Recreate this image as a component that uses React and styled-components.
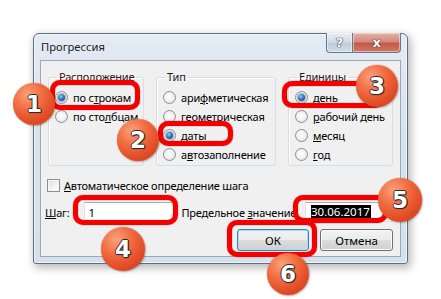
import styled, { createGlobalStyle } from 'styled-components';

const GlobalStyle = createGlobalStyle`
  html, body {
    margin: 0;
    padding: 0;
    background: #ffffff;
  }
  * {
    box-sizing: border-box;
  }
`;

const Page = styled.div`
  position: relative;
  width: 441px;
  height: 299px;
  overflow: hidden;
  padding: 33px 0 0 33px;
  background: #ffffff;
  font-family: 'Noto Sans', 'Open Sans', sans-serif;
  font-size: 11px;
  letter-spacing: -0.2px;
  color: #000;
`;

const Window = styled.div`
  width: 375px;
  height: 231px;
  display: flex;
  flex-direction: column;
  padding: 0 6px 6px;
  border: 1px solid #5f6d7d;
  border-radius: 6px 6px 3px 3px;
  background: linear-gradient(180deg, #e3ebf4 0%, #d9e3ee 40%, #d6e0eb 100%);
  box-shadow: inset 0 0 0 1px rgba(255, 255, 255, 0.6), 2px 3px 9px 1px rgba(0, 0, 0, 0.28);
`;

const TitleBar = styled.div`
  height: 26px;
  display: flex;
  justify-content: space-between;
  align-items: flex-start;
  flex-shrink: 0;
`;

const Title = styled.div`
  line-height: 26px;
  padding-left: 1px;
  font-size: 11.2px;
  letter-spacing: 0;
  color: #1b1b1b;
`;

const CaptionButtons = styled.div`
  display: flex;
  margin-top: -1px;
  height: 20px;
`;

const CaptionButton = styled.div`
  width: ${(p) => p.$w}px;
  height: 20px;
  display: flex;
  align-items: center;
  justify-content: center;
  border: 1px solid #6a7785;
  border-top: none;
  border-left: ${(p) => (p.$close ? 'none' : '1px solid #6a7785')};
  border-radius: ${(p) => (p.$close ? '0 0 4px 0' : '0 0 0 4px')};
  background: ${(p) =>
    p.$close
      ? 'linear-gradient(180deg, #e3b1a8 0%, #d48a7e 45%, #c25a49 55%, #cf7a6a 100%)'
      : 'linear-gradient(180deg, #e6edf4 0%, #d3dde8 45%, #bfcddb 55%, #cfdbe7 100%)'};
  box-shadow: inset 0 0 0 1px rgba(255, 255, 255, 0.45);
  font-family: 'DejaVu Sans', sans-serif;
  font-weight: bold;
  font-size: 13px;
  color: #ffffff;
  text-shadow: 0 0 1px #3a3a3a, 0 0 1px #3a3a3a, 0 0 1px #3a3a3a;
`;

const Client = styled.div`
  flex: 1;
  display: flex;
  flex-direction: column;
  padding: 9px 7px 0;
  border: 1px solid #9aa8b7;
  background: #f0f0f0;
`;

const GroupsRow = styled.div`
  display: flex;
  gap: 12px;
`;

const Group = styled.fieldset`
  width: ${(p) => p.$w}px;
  height: 96px;
  margin: 0;
  padding: 4px 0 0 6px;
  border: 1px solid #d5dfe5;
  border-radius: 3px;
  box-shadow: inset 1px 1px 0 #ffffff;
  min-width: 0;
`;

const Legend = styled.legend`
  padding: 0 2px;
  margin-left: 2px;
  line-height: 14px;
  color: #1a1a1a;
`;

const OptionRow = styled.div`
  height: 19px;
  display: flex;
  align-items: center;
  gap: 5px;
  white-space: nowrap;
`;

const Radio = styled.span`
  width: 13px;
  height: 13px;
  border-radius: 50%;
  flex-shrink: 0;
  border: 1px solid #8c8f91;
  background: radial-gradient(circle at 45% 45%, #ffffff 0%, #f2f2f2 45%, #d6d6d6 100%);
  display: flex;
  align-items: center;
  justify-content: center;

  &::after {
    content: '';
    width: 7px;
    height: 7px;
    border-radius: 50%;
    display: ${(p) => (p.$on ? 'block' : 'none')};
    background: radial-gradient(circle at 40% 35%, #9bd0f5 0%, #3a7fc4 40%, #0f3266 100%);
    box-shadow: 0 0 0 1px rgba(30, 70, 120, 0.35);
  }
`;

const Key = styled.span`
  text-decoration: underline;
  text-underline-offset: 1px;
`;

const CheckRow = styled.div`
  height: 19px;
  margin-top: 10px;
  display: flex;
  align-items: center;
  gap: 4px;
  margin-left: -1px;
`;

const Checkbox = styled.span`
  width: 13px;
  height: 13px;
  border: 1px solid #8c8f91;
  background: linear-gradient(135deg, #dcdcdc 0%, #f4f4f4 60%, #ffffff 100%);
  box-shadow: inset 0 0 0 1px #f7f7f7;
  flex-shrink: 0;
`;

const FieldsRow = styled.div`
  display: flex;
  align-items: center;
  margin-top: 7px;
  height: 20px;
`;

const FieldLabel = styled.span`
  width: ${(p) => p.$w}px;
  padding-left: ${(p) => p.$pad || 0}px;
  margin-left: ${(p) => p.$ml || 0}px;
  white-space: nowrap;
`;

const TextBox = styled.div`
  width: ${(p) => p.$w}px;
  height: 20px;
  display: flex;
  align-items: center;
  padding-left: ${(p) => p.$pad}px;
  background: #ffffff;
  border: 1px solid #dbdfe6;
  border-top-color: #abadb3;
  border-left-color: #e2e3ea;
  font-size: 11.5px;
  letter-spacing: 0;
`;

const Selected = styled.span`
  background: #000000;
  color: #ffffff;
  line-height: 14px;
  padding-right: 1px;
`;

const ButtonsRow = styled.div`
  display: flex;
  justify-content: flex-end;
  gap: 11px;
  margin-top: 7px;
`;

const Button = styled.div`
  width: ${(p) => p.$w}px;
  height: 22px;
  display: flex;
  align-items: center;
  justify-content: center;
  border: 1px solid ${(p) => (p.$default ? '#3c7fb1' : '#707070')};
  border-radius: 3px;
  background: linear-gradient(180deg, #f2f2f2 0%, #ebebeb 50%, #dddddd 51%, #cfcfcf 100%);
  box-shadow: inset 0 0 0 1px ${(p) => (p.$default ? '#a9dcf6' : '#fbfbfb')};
  font-size: 11.5px;
  letter-spacing: 0;
`;

/* annotations: they sit on top of the dialog */
const Mark = styled.div`
  position: absolute;
  left: ${(p) => p.$x}px;
  top: ${(p) => p.$y}px;
  width: ${(p) => p.$w}px;
  height: ${(p) => p.$h}px;
  border: 5px solid #f50000;
  border-radius: 10px;
  box-shadow: 0 0 1px 0 #a00000, inset 0 0 1px 0 #a00000;
`;

const Badge = styled.div`
  position: absolute;
  left: ${(p) => p.$cx - p.$r}px;
  top: ${(p) => p.$cy - p.$r}px;
  width: ${(p) => p.$r * 2}px;
  height: ${(p) => p.$r * 2}px;
  border-radius: 50%;
  display: flex;
  align-items: center;
  justify-content: center;
  background: radial-gradient(circle at 35% 28%, #fba27a 0%, #f26d43 35%, #e24e27 65%, #c5361a 100%);
  box-shadow: 0 0 1px 0 #a3341b, 1px 1px 2px rgba(0, 0, 0, 0.25);
  font-family: 'DejaVu Sans', sans-serif;
  font-weight: bold;
  font-size: 23px;
  letter-spacing: 0;
  color: #ffffff;
  text-shadow: -1px 0 0 #2b2b2b, 1px 0 0 #2b2b2b, 0 -1px 0 #2b2b2b, 0 1px 0 #2b2b2b,
    1px 1px 1px #2b2b2b;
`;

const App = () => {
  return (
    <Page>
      <GlobalStyle />
      <Window>
        <TitleBar>
          <Title>Прогрессия</Title>
          <CaptionButtons>
            <CaptionButton $w={27}>?</CaptionButton>
            <CaptionButton $w={48} $close>
              x
            </CaptionButton>
          </CaptionButtons>
        </TitleBar>
        <Client>
          <GroupsRow>
            <Group $w={96}>
              <Legend>Расположение</Legend>
              <OptionRow>
                <Radio $on />
                <span>
                  по с<Key>т</Key>рокам
                </span>
              </OptionRow>
              <OptionRow>
                <Radio />
                <span>
                  по сто<Key>л</Key>бцам
                </span>
              </OptionRow>
            </Group>
            <Group $w={120}>
              <Legend>Тип</Legend>
              <OptionRow>
                <Radio />
                <span>
                  ари<Key>ф</Key>метическая
                </span>
              </OptionRow>
              <OptionRow>
                <Radio />
                <span>
                  <Key>г</Key>еометрическая
                </span>
              </OptionRow>
              <OptionRow>
                <Radio $on />
                <span>
                  дат<Key>ы</Key>
                </span>
              </OptionRow>
              <OptionRow>
                <Radio />
                <span>
                  а<Key>в</Key>тозаполнение
                </span>
              </OptionRow>
            </Group>
            <Group $w={105}>
              <Legend>Единицы</Legend>
              <OptionRow>
                <Radio $on />
                <span>
                  д<Key>е</Key>нь
                </span>
              </OptionRow>
              <OptionRow>
                <Radio />
                <span>
                  <Key>р</Key>абочий день
                </span>
              </OptionRow>
              <OptionRow>
                <Radio />
                <span>
                  <Key>м</Key>есяц
                </span>
              </OptionRow>
              <OptionRow>
                <Radio />
                <span>
                  <Key>г</Key>од
                </span>
              </OptionRow>
            </Group>
          </GroupsRow>

          <CheckRow>
            <Checkbox />
            <span>
              <Key>А</Key>втоматическое определение шага
            </span>
          </CheckRow>

          <FieldsRow>
            <FieldLabel $w={39} $ml={-3}>
              <Key>Ш</Key>аг:
            </FieldLabel>
            <TextBox $w={92} $pad={4}>
              1
            </TextBox>
            <FieldLabel $w={132} $pad={7}>
              Предельное <Key>з</Key>начение
            </FieldLabel>
            <TextBox $w={89} $pad={5}>
              <Selected>30.06.2017</Selected>
            </TextBox>
          </FieldsRow>

          <ButtonsRow>
            <Button $w={72} $default>
              ОК
            </Button>
            <Button $w={73}>Отмена</Button>
          </ButtonsRow>
        </Client>
      </Window>

      <Mark $x={50} $y={80} $w={90} $h={30} />
      <Mark $x={158} $y={121} $w={75} $h={25} />
      <Mark $x={282} $y={81} $w={103} $h={27} />
      <Mark $x={73} $y={195} $w={105} $h={30} />
      <Mark $x={293} $y={195} $w={95} $h={28} />
      <Mark $x={227} $y={220} $w={90} $h={37} />

      <Badge $cx={34} $cy={104} $r={21}>1</Badge>
      <Badge $cx={138} $cy={140} $r={21}>2</Badge>
      <Badge $cx={377} $cy={86} $r={21}>3</Badge>
      <Badge $cx={123} $cy={249} $r={22}>4</Badge>
      <Badge $cx={400} $cy={200} $r={22}>5</Badge>
      <Badge $cx={288} $cy={274} $r={21}>6</Badge>
    </Page>
  );
};

export default App;
